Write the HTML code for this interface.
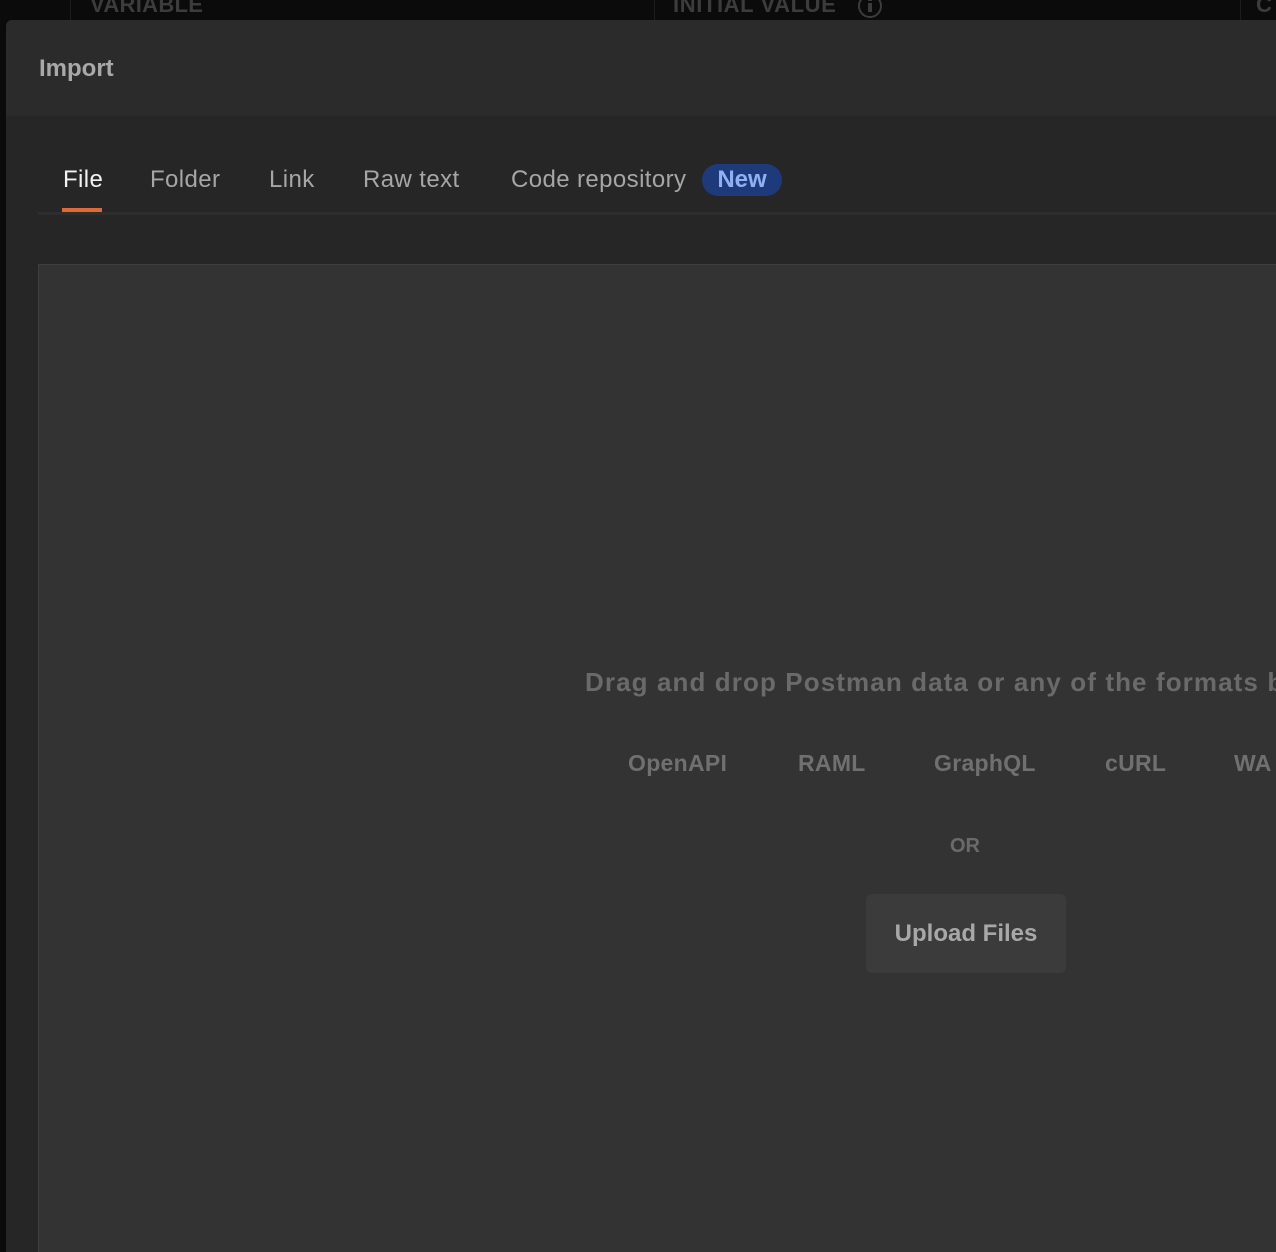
<!DOCTYPE html>
<html><head><meta charset="utf-8"><style>
*{margin:0;padding:0;box-sizing:border-box}
html,body{width:1276px;height:1252px;overflow:hidden}
body{background:#0b0b0b;font-family:"Liberation Sans",Arial,sans-serif;position:relative}
.a{position:absolute;white-space:nowrap}
.bt{color:#3c3c3c;font-size:22px;font-weight:bold;top:-8px}
.modal{position:absolute;left:6px;top:20px;width:1270px;height:1232px;background:#262626;border-radius:6px 0 0 0;overflow:hidden}
.hdr{position:absolute;left:0;top:0;right:0;height:96px;background:#2b2b2b}
.tab{font-size:24px;color:#a6a6a6;top:146px;letter-spacing:0.4px}
.drop{position:absolute;left:32px;top:244px;width:1238px;height:988px;background:#333;border:1px solid #3e3e3e;border-right:none;border-bottom:none}
.fmt{font-size:23px;color:#707070;font-weight:bold;top:730px;letter-spacing:0.3px}
</style></head><body>
<div class="a" style="left:70px;top:0;width:1px;height:20px;background:#1c1c1c"></div>
<div class="a" style="left:654px;top:0;width:1px;height:20px;background:#1c1c1c"></div>
<div class="a" style="left:1240px;top:0;width:1px;height:20px;background:#1c1c1c"></div>
<div class="a bt" style="left:90px;letter-spacing:0.3px">VARIABLE</div>
<div class="a bt" style="left:673px;letter-spacing:0.6px">INITIAL VALUE</div>
<div class="a" style="left:858px;top:-6px;width:24px;height:24px;border:2px solid #3c3c3c;border-radius:50%"><div class="a" style="left:8px;top:7px;width:4px;height:9px;background:#3c3c3c"></div><div class="a" style="left:8px;top:2px;width:4px;height:3px;background:#3c3c3c"></div></div>
<div class="a bt" style="left:1256px">C</div>
<div class="modal">
 <div class="hdr"></div>
 <div class="a" style="left:33px;top:35px;font-size:24px;font-weight:bold;color:#a9a9a9">Import</div>
 <div class="a tab" style="left:57px;color:#f2f2f2">File</div>
 <div class="a tab" style="left:144px">Folder</div>
 <div class="a tab" style="left:263px">Link</div>
 <div class="a tab" style="left:357px">Raw text</div>
 <div class="a tab" style="left:505px">Code repository</div>
 <div class="a" style="left:696px;top:144px;width:80px;height:32px;border-radius:16px;background:#1f3a7a;color:#8fb0f5;font-size:24px;font-weight:bold;text-align:center;line-height:32px">New</div>
 <div class="a" style="left:32px;top:192px;width:1238px;height:3px;background:#2e2e2e"></div>
 <div class="a" style="left:56px;top:188px;width:40px;height:4px;background:#e0693a"></div>
 <div class="drop"></div>
 <div class="a" style="left:579px;top:647px;font-size:26px;font-weight:bold;color:#6a6a6a;letter-spacing:1.1px">Drag and drop Postman data or any of the formats b</div>
 <div class="a fmt" style="left:622px">OpenAPI</div>
 <div class="a fmt" style="left:792px">RAML</div>
 <div class="a fmt" style="left:928px">GraphQL</div>
 <div class="a fmt" style="left:1099px">cURL</div>
 <div class="a fmt" style="left:1228px">WA</div>
 <div class="a" style="left:944px;top:815px;font-size:20px;font-weight:bold;color:#6a6a6a">OR</div>
 <div class="a" style="left:860px;top:874px;width:200px;height:79px;background:#3b3b3b;border-radius:6px;color:#a8a8a8;font-size:24px;font-weight:bold;text-align:center;line-height:79px">Upload Files</div>
</div>
</body></html>
